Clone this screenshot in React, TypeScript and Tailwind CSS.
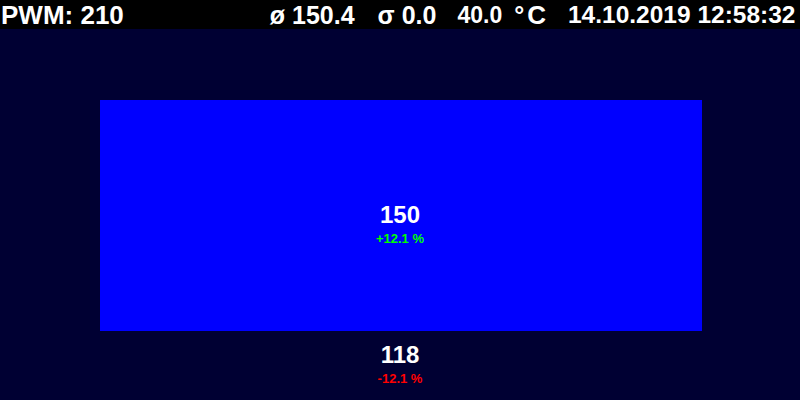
import React from "react";

export default function App() {
  return (
    <div className="w-[800px] h-[400px] bg-[#000033] flex flex-col overflow-hidden font-['Liberation_Sans',Arial,sans-serif] font-bold text-white">
      <div className="h-[29px] bg-black flex items-center leading-none whitespace-nowrap pt-[1px]">
        <span className="ml-[1px] text-[26px]">PWM: 210</span>
        <span className="ml-[146px] text-[25px]">ø 150.4</span>
        <span className="ml-[23px] text-[25px]">σ 0.0</span>
        <span className="ml-[21px] text-[23px]">40.0</span>
        <span className="ml-[12px] text-[25px]">°</span>
        <span className="ml-[3px] text-[26px]">C</span>
        <span className="ml-[22px] text-[24.5px]">14.10.2019 12:58:32</span>
      </div>
      <div className="ml-[100px] mt-[71px] w-[602px] h-[231px] bg-[#0000ff] flex flex-col items-center justify-center">
        <div className="text-[24px] leading-none mt-[17px] mr-[2px]">150</div>
        <div className="text-[13px] leading-none mt-[5px] mr-[2px] text-[#00ff00]">+12.1 %</div>
      </div>
      <div className="flex flex-col items-center mt-[12px]">
        <div className="text-[24px] leading-none">118</div>
        <div className="text-[13px] leading-none mt-[5px] text-[#ff0000]">-12.1 %</div>
      </div>
    </div>
  );
}
